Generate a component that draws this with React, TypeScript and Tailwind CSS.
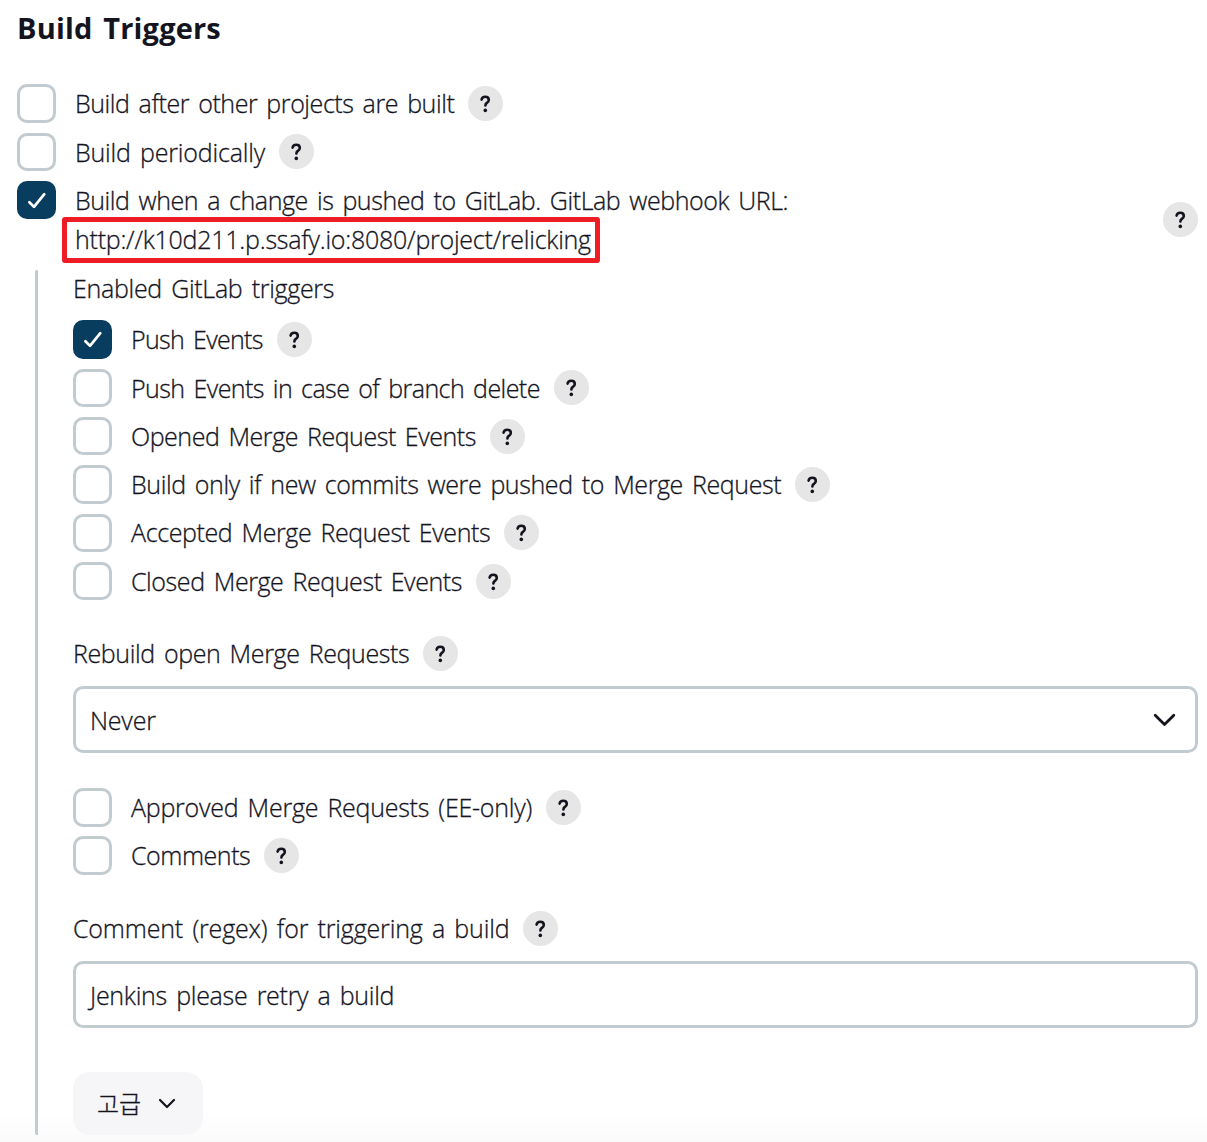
import React from "react";

function Help() {
  return (
    <button
      type="button"
      aria-label="Help"
      className="flex size-[35px] shrink-0 items-center justify-center rounded-full bg-[#e6e6e6] text-[#14141f]"
    >
      <svg width="35" height="35" viewBox="0 0 35 35" fill="none">
        <path
          d="M13.6 13.6c.3-1.7 1.7-2.8 3.6-2.8 2.1 0 3.6 1.3 3.6 3.1 0 1.5-.9 2.3-1.9 3-1 .7-1.5 1.3-1.5 2.5"
          stroke="currentColor"
          strokeWidth="2.6"
          strokeLinecap="round"
          strokeLinejoin="round"
        />
        <circle cx="17.3" cy="24.4" r="1.8" fill="currentColor" />
      </svg>
    </button>
  );
}

function Box({ checked = false }: { checked?: boolean }) {
  return checked ? (
    <span className="flex h-[38.5px] w-[39px] shrink-0 items-center justify-center rounded-[10px] bg-[#083d5f]">
      <svg width="39" height="39" viewBox="0 0 39 39" fill="none" stroke="#fff" strokeWidth="2.7" strokeLinecap="round" strokeLinejoin="round">
        <path d="M12.4 21.2L17 25.9L27.3 13.2" />
      </svg>
    </span>
  ) : (
    <span className="h-[38.5px] w-[39px] shrink-0 rounded-[10px] border-[3px] border-[#c1cbd0] bg-white" />
  );
}

function Row({ label, spacing, checked }: { label: string; spacing: string; checked?: boolean }) {
  return (
    <div className="flex h-[38.5px] items-center">
      <Box checked={checked} />
      <span className={`ml-[19px] mr-[14px] whitespace-nowrap ${spacing}`}>{label}</span>
      <Help />
    </div>
  );
}

const events = [
  { label: "Push Events", spacing: "tracking-[-0.66px]", checked: true },
  { label: "Push Events in case of branch delete", spacing: "tracking-[-0.56px]" },
  { label: "Opened Merge Request Events", spacing: "tracking-[-0.45px]" },
  { label: "Build only if new commits were pushed to Merge Request", spacing: "tracking-[-0.39px]" },
  { label: "Accepted Merge Request Events", spacing: "tracking-[-0.38px]" },
  { label: "Closed Merge Request Events", spacing: "tracking-[-0.41px]" },
];

export default function App() {
  return (
    <main className="h-[1142px] w-[1207px] overflow-hidden bg-[linear-gradient(#fff_1112px,#fafafa_1142px)] pl-[17px] pr-[9px] font-['Open_Sans','Noto_Sans_CJK_KR',sans-serif] text-[25px] font-light leading-[38.7px] text-[#14141f] [-webkit-text-stroke:0.3px_#14141f] [word-spacing:3px]">
      <h2 className="h-[84.3px] pt-[9px] text-[29px] font-bold tracking-[0.18px] [-webkit-text-stroke:0px]">Build Triggers</h2>

      <div className="flex flex-col gap-[9.8px]">
        <Row label="Build after other projects are built" spacing="tracking-[-0.42px]" />
        <Row label="Build periodically" spacing="pt-[0.7px] tracking-[-0.18px]" />
        <div className="flex items-start">
          <Box checked />
          <div className="relative ml-[19px] flex-1 whitespace-nowrap">
            <div className="tracking-[-0.43px]">
              <span>Build when a change is pushed to GitLab. GitLab webhook URL:</span>
            </div>
            <div className="tracking-[-0.24px]">
              <span>http://k10d211.p.ssafy.io:8080/project/relicking</span>
            </div>
            <div className="absolute left-[-13px] top-[36px] h-[46px] w-[538px] rounded-[3px] border-[5px] border-[#ee1c25]" />
          </div>
          <div className="mt-[21px]">
            <Help />
          </div>
        </div>
      </div>

      <section className="ml-[18px] mt-[11.9px] h-[865px] rounded-[2px] border-l-[3px] border-[#c1cbd0] pl-[35px]">
        <div className="flex h-[50.2px] items-start tracking-[-0.29px]">
          <span className="-mt-px">Enabled GitLab triggers</span>
        </div>
        <div className="flex flex-col gap-[9.8px]">
          {events.map((e) => (
            <Row key={e.label} {...e} />
          ))}
        </div>

        <div className="mt-[33.5px] flex h-[38.7px] items-center">
          <span className="mr-[14px] tracking-[-0.37px]">Rebuild open Merge Requests</span>
          <Help />
        </div>
        <div className="mt-[13.7px] flex h-[67px] items-center justify-between rounded-[10px] border-[3px] border-[#c1cbd0] bg-white pl-[14px] pr-[19px]">
          <span className="pt-[1px] tracking-[-0.2px]">Never</span>
          <svg width="23" height="14" viewBox="0 0 23 14" fill="none" stroke="currentColor" strokeWidth="2.8" strokeLinecap="round" strokeLinejoin="round">
            <path d="M2.2 2.2L11.5 11.4L20.8 2.2" />
          </svg>
        </div>

        <div className="mt-[34.8px] flex flex-col gap-[9.8px]">
          <Row label="Approved Merge Requests (EE-only)" spacing="pt-[0.7px] tracking-[-0.24px]" />
          <Row label="Comments" spacing="tracking-[-0.44px]" />
        </div>

        <div className="mt-[34.7px] flex h-[38.7px] items-center">
          <span className="mr-[14px] pb-[1px] tracking-[-0.16px]">Comment (regex) for triggering a build</span>
          <Help />
        </div>
        <div className="mt-[13px] flex h-[67px] items-center rounded-[10px] border-[3px] border-[#c1cbd0] bg-white pl-[14px]">
          <span className="pt-[2px] tracking-[-0.27px]">Jenkins please retry a build</span>
        </div>

        <button type="button" className="mt-[44px] flex h-[63px] w-[130px] items-center rounded-[17px] bg-[#f6f6f9] pl-[24px] font-light">
          <span className="pt-[2px] text-[24px]">고급</span>
          <svg className="ml-[17px] mt-px" width="18" height="12" viewBox="0 0 18 12" fill="none" stroke="currentColor" strokeWidth="2.2" strokeLinecap="round" strokeLinejoin="round">
            <path d="M2 2L9 9L16 2" />
          </svg>
        </button>
      </section>
    </main>
  );
}
